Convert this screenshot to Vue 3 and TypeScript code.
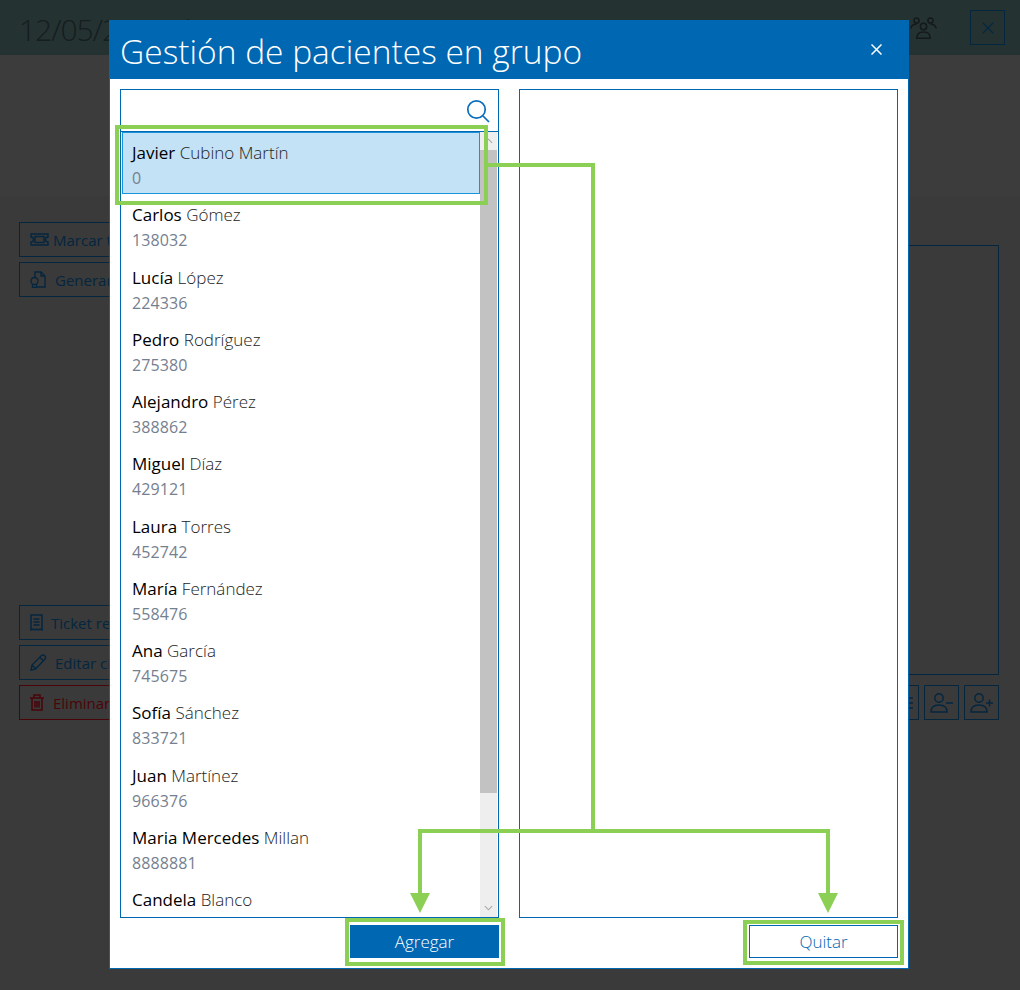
<script setup lang="ts">
interface Patient { first: string; last: string; id: string }
const patients: Patient[] = [
  { first: 'Javier', last: 'Cubino Martín', id: '0' },
  { first: 'Carlos', last: 'Gómez', id: '138032' },
  { first: 'Lucía', last: 'López', id: '224336' },
  { first: 'Pedro', last: 'Rodríguez', id: '275380' },
  { first: 'Alejandro', last: 'Pérez', id: '388862' },
  { first: 'Miguel', last: 'Díaz', id: '429121' },
  { first: 'Laura', last: 'Torres', id: '452742' },
  { first: 'María', last: 'Fernández', id: '558476' },
  { first: 'Ana', last: 'García', id: '745675' },
  { first: 'Sofía', last: 'Sánchez', id: '833721' },
  { first: 'Juan', last: 'Martínez', id: '966376' },
  { first: 'Maria Mercedes', last: 'Millan', id: '8888881' },
  { first: 'Candela', last: 'Blanco', id: '' },
]
</script>

<template>
  <div class="page">
    <header class="topbar">
      <span class="date">12/05/2025 de 10:00 a 11:00</span>
      <div class="top-actions">
        <svg class="group-ic" viewBox="0 0 27 22" width="27" height="22" fill="none" stroke="#14191a" stroke-width="1.5">
          <circle cx="6.500" cy="3.500" r="2.600" /><circle cx="20.500" cy="3.500" r="2.600" /><circle cx="13.500" cy="9.500" r="3.200" />
          <path d="M.8 11.500c.5-3 2.700-4.300 5.700-4.300M26.200 11.500c-.5-3-2.700-4.300-5.700-4.300M6.800 21.200c0-4.500 2.700-6.200 6.700-6.200s6.700 1.700 6.700 6.200z" />
        </svg>
        <button class="dim-btn square close-b">
          <svg viewBox="0 0 12 12" width="12" height="12" fill="none" stroke="#04263f" stroke-width="1.200"><path d="M1 1l10 10M11 1L1 11" /></svg>
        </button>
      </div>
    </header>

    <div class="band"></div>

    <main class="back">
      <aside class="side">
        <div class="side-top">
          <button class="dim-btn wide">
            <svg class="g4" viewBox="0 0 19 13" width="19" height="13" fill="none" stroke="#04263f" stroke-width="1.400"><path d="M1 1h17v3a2.500 2.500 0 0 0 0 5v3H1V9a2.500 2.500 0 0 0 0-5z" /><rect x="5" y="3.500" width="9" height="6" /></svg>
            <span>Marcar turno</span>
          </button>
          <button class="dim-btn wide">
            <svg class="g9" viewBox="0 0 16 17" width="16" height="17" fill="none" stroke="#04263f" stroke-width="1.300"><path d="M5 6V1h6l4 4v11H7" /><path d="M11 1v4h4" /><circle cx="4.500" cy="10" r="3.500" /><path d="M2.500 13v3.500h4V13" /></svg>
            <span>Generar</span>
          </button>
        </div>
        <div class="side-bottom">
          <button class="dim-btn wide">
            <svg class="g8" viewBox="0 0 13 17" width="13" height="17" fill="none" stroke="#04263f" stroke-width="1.500"><path d="M1 1h11v15l-2-1-1.800 1-1.700-1-1.700 1L3 15l-2 1zM3.500 5h6M3.500 8h6M3.500 11h6" /></svg>
            <span>Ticket recibo</span>
          </button>
          <button class="dim-btn wide">
            <svg class="g8" viewBox="0 0 17 17" width="17" height="17" fill="none" stroke="#04263f" stroke-width="1.400"><path d="M1 16l1-5L11.500 1.500q1.700-1.200 3.200.3t.3 3.200L5.500 15zM2 11l4 4M10 3.500l3.500 3.500" /></svg>
            <span>Editar cita</span>
          </button>
          <button class="dim-btn wide danger">
            <svg class="g9" viewBox="0 0 14 17" width="14" height="17" fill="none" stroke="#4a0508" stroke-width="1.500"><path d="M0 4h14M4 4V1h6v3M2 4v12h10V4M5 7v6.500M7 7v6.500M9 7v6.500" /></svg>
            <span>Eliminar</span>
          </button>
        </div>
      </aside>
      <section class="right">
        <div class="big-panel"></div>
        <div class="right-actions">
          <button class="dim-btn square">
            <svg viewBox="0 0 24 22" width="24" height="22" fill="none" stroke="#04263f" stroke-width="1.400"><path d="M17 6h6M17 11h6M17 16h6" /></svg>
          </button>
          <button class="dim-btn square">
            <svg viewBox="0 0 24 22" width="24" height="22" fill="none" stroke="#04263f" stroke-width="1.400"><circle cx="9" cy="6" r="4.200" /><path d="M1 20c0-4.500 3-7 8-7s8 2.500 8 7zM16 11h7" /></svg>
          </button>
          <button class="dim-btn square">
            <svg viewBox="0 0 24 22" width="24" height="22" fill="none" stroke="#04263f" stroke-width="1.400"><circle cx="9" cy="6" r="4.200" /><path d="M1 20c0-4.500 3-7 8-7s8 2.500 8 7zM16 11h7M19.500 7.500v7" /></svg>
          </button>
        </div>
      </section>
    </main>

    <div class="modal">
      <div class="modal-head">
        <h1>Gestión de pacientes en grupo</h1>
        <svg class="x-ic" viewBox="0 0 11 11" width="11" height="11" fill="none" stroke="#fff" stroke-width="1.500"><path d="M.5.500l10 10M10.500.500l-10 10" /></svg>
      </div>
      <div class="modal-body">
        <div class="col">
          <div class="panel">
            <div class="search">
              <svg viewBox="0 0 24 24" width="24" height="24" fill="none" stroke="#0a6ebd" stroke-width="1.700"><circle cx="10.500" cy="10.500" r="8.700" /><path d="M17 17l6 6" /></svg>
            </div>
            <div class="list-wrap">
              <ul class="list">
                <li v-for="(p, i) in patients" :key="p.first" class="item" :class="{ selected: i === 0 }">
                  <div class="name"><b>{{ p.first }}</b> {{ p.last }}</div>
                  <div v-if="p.id" class="pid">{{ p.id }}</div>
                </li>
              </ul>
              <div class="scrollbar">
                <svg class="chev" viewBox="0 0 10 6" width="9" height="6" fill="none" stroke="#a8a8a8" stroke-width="1.200"><path d="M1 5l4-4 4 4" /></svg>
                <div class="thumb"></div>
                <svg class="chev" viewBox="0 0 10 6" width="9" height="6" fill="none" stroke="#a8a8a8" stroke-width="1.200"><path d="M1 1l4 4 4-4" /></svg>
              </div>
            </div>
          </div>
          <div class="foot"><button class="btn primary">Agregar</button></div>
        </div>
        <div class="col">
          <div class="panel"></div>
          <div class="foot"><button class="btn outline">Quitar</button></div>
        </div>
      </div>
    </div>

    <svg class="marks" viewBox="0 0 1020 990" width="1020" height="990" fill="none" stroke="#8ccf55" stroke-width="4">
      <rect x="117" y="127" width="369" height="76" />
      <rect x="347" y="920" width="156" height="44" />
      <rect x="745" y="922" width="157" height="41" />
      <path d="M488 165H593V831M420 895V831H828V895" />
      <path d="M410 893h20l-10 20zM818 893h20l-10 20z" fill="#8ccf55" stroke="none" />
    </svg>
  </div>
</template>

<style>
html, body { margin: 0; background: #3a3a3a; }
</style>

<style scoped>
.page {
  position: relative;
  width: 1020px;
  height: 990px;
  overflow: hidden;
  background: #3a3a3a;
  font-family: "Open Sans", "Liberation Sans", sans-serif;
}
.topbar {
  height: 55px;
  box-sizing: border-box;
  background: #253232;
  padding: 10px 15px 0 19px;
  display: flex;
  align-items: flex-start;
  justify-content: space-between;
}
.date { font-size: 30px; font-weight: 300; line-height: 40px; letter-spacing: -1px; color: #141d20; }
.top-actions { display: flex; align-items: flex-start; gap: 33px; }
.group-ic { margin-top: 7px; }
.close-b { background: #3d3f3f; }
.band { height: 141px; background: #3c3c3c; }
.back {
  height: 794px;
  display: flex;
  justify-content: space-between;
  padding: 26px 21px 0 19px;
  box-sizing: border-box;
}
.side { width: 140px; height: 498px; display: flex; flex-direction: column; justify-content: space-between; }
.side-top, .side-bottom { display: flex; flex-direction: column; gap: 5px; }
.dim-btn {
  box-sizing: border-box;
  height: 35px;
  border: 1px solid #04263f;
  background: transparent;
  display: flex;
  align-items: center;
  font: inherit;
  font-size: 15px;
  color: #04263f;
  padding: 0;
}
.wide { width: 140px; padding-left: 10px; white-space: nowrap; overflow: hidden; }
.g4 { margin-right: 4px; }
.g8 { margin-right: 8px; }
.g9 { margin-right: 9px; }
.danger { border-color: #4a0508; color: #4a0508; }
.square { width: 35px; justify-content: center; }
.right { width: 300px; display: flex; flex-direction: column; align-items: flex-end; }
.big-panel { width: 300px; height: 430px; box-sizing: border-box; border: 1px solid #04263f; margin-top: 23px; }
.right-actions { display: flex; gap: 5px; margin-top: 10px; }

.modal {
  position: absolute;
  left: 109px;
  top: 20px;
  width: 800px;
  height: 949px;
  box-sizing: border-box;
  border: 1px solid #0067b3;
  border-top: 0;
  background: #fff;
  display: flex;
  flex-direction: column;
}
.modal-head {
  height: 59px;
  flex: none;
  margin: 0 -1px;
  background: #0067b3;
  display: flex;
  align-items: center;
  justify-content: space-between;
  padding: 0 27px 0 11px;
}
.modal-head h1 { margin: 3px 0 0; font-size: 33.500px; font-weight: 300; color: #fff; line-height: 56px; }
.modal-body {
  flex: 1;
  display: flex;
  gap: 20px;
  padding: 10px 10px 0 10px;
}
.col { width: 379px; display: flex; flex-direction: column; }
.panel {
  box-sizing: border-box;
  height: 829px;
  border: 1px solid #0067b3;
  display: flex;
  flex-direction: column;
  overflow: hidden;
}
.search {
  height: 42px;
  flex: none;
  box-sizing: border-box;
  border-bottom: 1px solid #0067b3;
  display: flex;
  align-items: flex-start;
  justify-content: flex-end;
  padding: 9px 8px 0 0;
}
.list-wrap { flex: 1; display: flex; min-height: 0; padding-right: 1px; }
.list { flex: 1; margin: 0; padding: 0 0 0 1px; list-style: none; overflow: hidden; }
.item { height: 62.250px; box-sizing: border-box; padding: 8px 0 0 10px; }
.item.selected {
  background: #c3e2f5;
  border: 1px solid #1a92d8;
  padding: 7px 0 0 9px;
  height: 62px;
  margin-bottom: .25px;
}
.name { font-size: 17px; line-height: 26px; font-weight: 300; color: #222; white-space: nowrap; }
.name b { font-weight: 400; color: #000; }
.pid { font-size: 16px; line-height: 24px; color: #75808f; font-weight: 400; letter-spacing: .1px; }
.scrollbar {
  width: 17px;
  flex: none;
  background: #eeeeee;
  display: flex;
  flex-direction: column;
  align-items: center;
  justify-content: space-between;
  padding: 6px 0;
  box-sizing: border-box;
  position: relative;
}
.thumb { position: absolute; left: 0; top: 18px; width: 17px; height: 643px; background: #c2c2c2; }
.foot { display: flex; justify-content: flex-end; padding-top: 7px; }
.btn {
  width: 149px;
  height: 33px;
  box-sizing: border-box;
  font: inherit;
  font-size: 17px;
  font-weight: 300;
  padding: 0;
}
.primary { background: #0067b3; color: #fff; border: 0; }
.outline { background: #fff; color: #0067b3; border: 1px solid #0067b3; }
.marks { position: absolute; left: 0; top: 0; pointer-events: none; }
</style>
